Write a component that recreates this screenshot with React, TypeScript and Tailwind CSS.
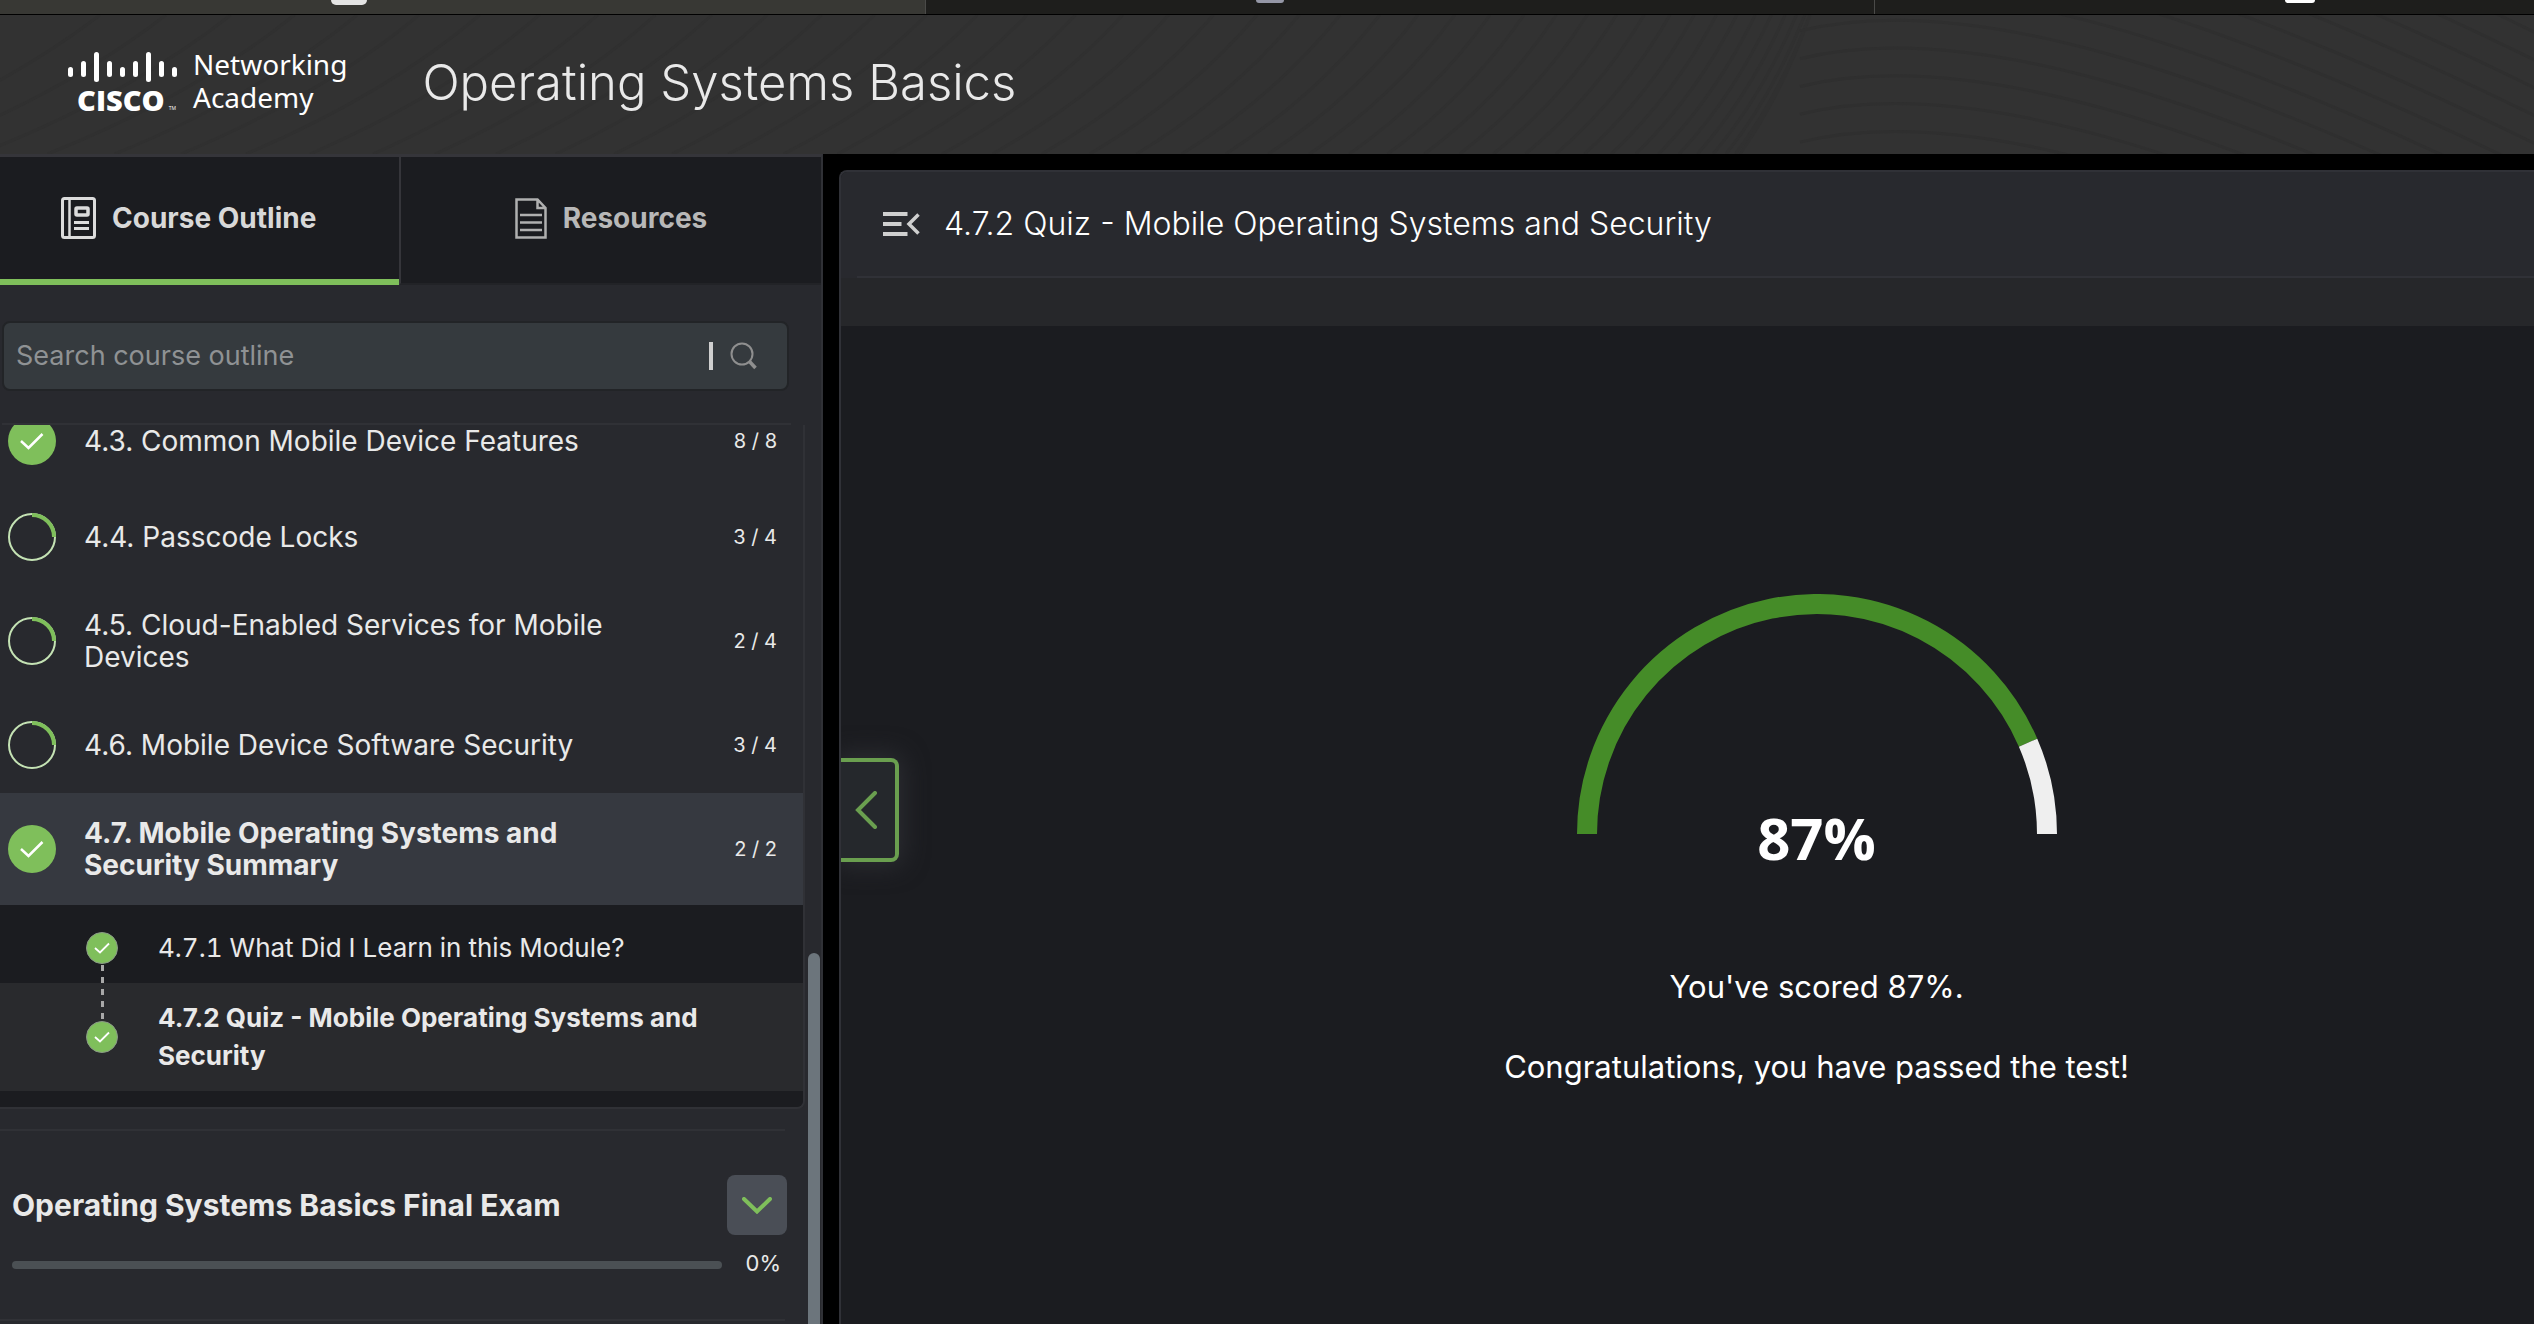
import React from "react";

type Status = "done" | "partial";

interface Section {
  title: string;
  count: string;
  status: Status;
  active?: boolean;
}

const sections: Section[] = [
  { title: "4.3. Common Mobile Device Features", count: "8 / 8", status: "done" },
  { title: "4.4. Passcode Locks", count: "3 / 4", status: "partial" },
  { title: "4.5. Cloud-Enabled Services for Mobile Devices", count: "2 / 4", status: "partial" },
  { title: "4.6. Mobile Device Software Security", count: "3 / 4", status: "partial" },
  { title: "4.7. Mobile Operating Systems and Security Summary", count: "2 / 2", status: "done", active: true },
];

function StatusIcon({ status }: { status: Status }) {
  if (status === "done") {
    return (
      <svg viewBox="0 0 48 48" className="size-12 shrink-0" aria-label="Completed">
        <circle cx="24" cy="24" r="24" fill="#7fbf5b" />
        <path d="M13 24 L20.500 31 L34.500 17" fill="none" stroke="#fff" strokeWidth="2.5" />
      </svg>
    );
  }
  return (
    <svg viewBox="0 0 48 48" className="size-12 shrink-0" aria-label="In progress">
      <circle cx="24" cy="24" r="23" fill="none" stroke="#c4e2b4" strokeWidth="2" />
      <path d="M24 2 A22 22 0 0 1 46 24" fill="none" stroke="#7fbf5b" strokeWidth="4" />
    </svg>
  );
}

function SmallCheck() {
  return (
    <svg viewBox="0 0 32 32" className="relative size-8 shrink-0" aria-label="Completed">
      <circle cx="16" cy="16" r="15.5" fill="#7fbf5b" stroke="#8a9a86" strokeWidth="1" />
      <path d="M9 16 L14 20.500 L23 11.500" fill="none" stroke="#fff" strokeWidth="1.8" />
    </svg>
  );
}

function HeaderWaves() {
  const left = Array.from({ length: 44 }, (_, i) => {
    const t = i / 43;
    const x = -160 + 1900 * (1 - Math.pow(1 - t, 1.6));
    const run = 260 - 190 * t;
    return `M${x} 140 Q${x + run * 0.6} 80 ${x + run} 0`;
  });
  const right = Array.from({ length: 13 }, (_, i) => {
    const y = -210 + i * 28;
    return `M1800 ${y + 30} C1960 ${y - 10} 2200 ${y + 60} 2560 ${y + 240}`;
  });
  return (
    <svg
      viewBox="0 0 2534 140"
      preserveAspectRatio="none"
      className="absolute inset-0 size-full"
      aria-hidden="true"
    >
      <path d={left.join(" ")} fill="none" stroke="#303030" strokeWidth="3" />
      <path d={right.join(" ")} fill="none" stroke="#2f2f2f" strokeWidth="3" />
    </svg>
  );
}

function Logo() {
  const bars = [
    [15, 25],
    [9, 25],
    [0, 30],
    [9, 25],
    [15, 25],
    [9, 25],
    [0, 30],
    [9, 25],
    [15, 25],
  ];
  return (
    <a href="#home" className="flex items-center gap-4 text-white">
      <span className="flex w-[109px] flex-col">
        <svg viewBox="0 0 109 30" className="h-[30px] w-[109px]" aria-hidden="true">
          {bars.map(([a, b], i) => (
            <rect key={i} x={i * 13} y={a} width="5" height={b - a} rx="2.5" fill="#fff" />
          ))}
        </svg>
        <span className="flex items-end justify-center pl-2 pt-1 font-['Open_Sans'] text-[29px] font-extrabold leading-7">
          CISCO
          <span className="pl-1 text-[5px] font-normal leading-3">TM</span>
        </span>
      </span>
      <span className="pb-1 font-['Noto_Sans'] text-[28px] leading-[33px]">
        Networking
        <br />
        Academy
      </span>
    </a>
  );
}

function BrowserStrip() {
  return (
    <div className="flex h-[15px] shrink-0 border-b border-black bg-[#1e1e1c]">
      <div className="w-[926px] border-r border-[#4a4a48] bg-[#383834] pl-[331px]">
        <div className="h-[5px] w-9 rounded-b-lg bg-[#e4e4e4]" />
      </div>
      <div className="w-[949px] border-r border-[#4a4a48] pl-[330px]">
        <div className="h-[3px] w-7 rounded-b-lg bg-[#9597a6]" />
      </div>
      <div className="flex-1 pl-[410px]">
        <div className="h-[3px] w-[30px] rounded-b-lg bg-white" />
      </div>
    </div>
  );
}

function Sidebar() {
  return (
    <aside className="flex w-[823px] shrink-0 flex-col border-r-2 border-t-[3px] border-r-[#303136] border-t-[#35353a] bg-[#28292e]">
      <div className="flex h-32 shrink-0" role="tablist">
        <button
          role="tab"
          aria-selected="true"
          className="flex w-[399px] items-center gap-4 border-b-6 border-[#7fbf5b] bg-[#1b1c20] pl-[61px] text-[28px] font-bold text-[#d8d8d8]"
        >
          <svg viewBox="0 0 35 42" className="h-[42px] w-[35px]" fill="none" stroke="#dcdcdc" aria-hidden="true">
            <rect x="1.5" y="1.5" width="32" height="39" rx="2" strokeWidth="3" />
            <path d="M8.5 2 V40" strokeWidth="2.5" />
            <rect x="15" y="11" width="12" height="7" rx="1" strokeWidth="3.5" />
            <path d="M13 25.5 H28 M13 31.5 H28" strokeWidth="3" />
          </svg>
          Course Outline
        </button>
        <button
          role="tab"
          aria-selected="false"
          className="flex flex-1 items-center justify-center gap-4 border-b-2 border-l-2 border-b-[#222327] border-l-[#35353a] bg-[#1b1c20] pb-1 text-[28px] font-bold text-[#b8b8b8]"
        >
          <svg viewBox="0 0 32 41" className="h-[41px] w-8" fill="none" stroke="#b0b0b0" strokeWidth="2.5" aria-hidden="true">
            <path d="M1.5 1.5 H22.5 L30.5 10 V39.5 H1.5 Z M22.5 1.5 V10 H30.5" />
            <path d="M5 17 H27 M5 24.5 H27 M5 32 H27" />
          </svg>
          Resources
        </button>
      </div>

      <div className="flex min-h-0 flex-1">
        <div className="flex min-w-0 flex-1 flex-col pt-9">
          <div className="ml-[2px] mr-4 flex h-[70px] shrink-0 items-center rounded-lg border-2 border-[#222427] bg-[#353a3e] pl-3 pr-[30px]">
            <input
              type="text"
              aria-label="Search course outline"
              placeholder="Search course outline"
              className="min-w-0 flex-1 bg-transparent text-[27px] text-[#e8e8e8] outline-none placeholder:text-[#8f9294]"
            />
            <span className="mr-[17px] h-7 w-1 bg-[#cfcfcf]" />
            <button aria-label="Search">
              <svg viewBox="0 0 27 28" className="h-7 w-[27px]" fill="none" stroke="#8f8f8f" aria-hidden="true">
                <circle cx="12" cy="12" r="10.5" strokeWidth="2" />
                <path d="M19.5 19.5 L25.5 26" strokeWidth="3.5" />
              </svg>
            </button>
          </div>

          <div className="ml-[2px] mr-[14px] mt-8 h-[2px] shrink-0 bg-[#303136]" />

          <div className="shrink-0 overflow-hidden rounded-br-lg border-b-2 border-r-2 border-[#303136]">
            <ul className="-mt-8">
              {sections.map((s) => (
                <li key={s.title}>
                  <a
                    href="#section"
                    className={
                      s.active
                        ? "flex min-h-24 items-center bg-[#363940] py-6 pl-2 pr-[26px] font-bold"
                        : "flex min-h-24 items-center py-6 pl-2 pr-[26px]"
                    }
                  >
                    <StatusIcon status={s.status} />
                    <span className="ml-7 w-[550px] text-[28px] leading-8">{s.title}</span>
                    <span className="ml-auto text-xl font-normal">{s.count}</span>
                  </a>
                </li>
              ))}
            </ul>
            <ul className="bg-[#1b1c20] pb-4 pt-2 text-[26px] leading-[38px]">
              <li>
                <a href="#471" className="flex items-center gap-10 py-4 pl-[86px] pr-20 tabular-nums">
                  <SmallCheck />
                  <span>4.7.1 What Did I Learn in this Module?</span>
                </a>
              </li>
              <li className="relative bg-[#292a2d]">
                <svg className="absolute -top-[18px] left-[101px] h-[56px] w-[3px]" aria-hidden="true">
                  <path d="M1.5 0 V56" stroke="#a8a8a8" strokeWidth="3" strokeDasharray="6 6" />
                </svg>
                <a href="#472" className="flex items-center gap-10 py-4 pl-[86px] pr-20 font-bold">
                  <SmallCheck />
                  <span>4.7.2 Quiz - Mobile Operating Systems and Security</span>
                </a>
              </li>
            </ul>
          </div>

          <div className="mr-5 mt-5 shrink-0 border-y-2 border-[#303136] pb-[42px] pl-3 pt-11">
            <div className="-mr-[2px] flex items-center justify-between">
              <h2 className="text-[30px] font-bold">Operating Systems Basics Final Exam</h2>
              <button
                aria-label="Expand Final Exam"
                className="flex size-[60px] items-center justify-center rounded-lg bg-[#4a4e56]"
              >
                <svg viewBox="0 0 30 17" className="h-[17px] w-[30px]" fill="none" aria-hidden="true">
                  <path d="M2 2 L15 14.5 L28 2" stroke="#7fbf5b" strokeWidth="4" strokeLinecap="round" />
                </svg>
              </button>
            </div>
            <div className="mt-[14px] flex items-center gap-6">
              <div
                role="progressbar"
                aria-label="Final Exam progress"
                aria-valuenow={0}
                className="mt-1 h-2 flex-1 rounded-full bg-[#4b5054]"
              />
              <span className="pr-1 text-[22px] leading-7">0%</span>
            </div>
          </div>
        </div>
        <div className="flex w-4 shrink-0 flex-col items-start pl-[3px] pt-[668px]">
          <div className="w-3 flex-1 rounded-t-full bg-[#6c757c]" />
        </div>
      </div>
    </aside>
  );
}

function Gauge({ value }: { value: number }) {
  const r = 230;
  const a = Math.PI * (1 - value / 100);
  const x = 240 + r * Math.cos(a);
  const y = 240 - r * Math.sin(a);
  return (
    <svg viewBox="0 0 480 240" className="h-60 w-[480px]" fill="none" strokeWidth="20" aria-hidden="true">
      <path d={`M10 240 A${r} ${r} 0 0 1 ${x} ${y}`} stroke="#458c28" />
      <path d={`M${x} ${y} A${r} ${r} 0 0 1 470 240`} stroke="#efefef" />
    </svg>
  );
}

function QuizPanel() {
  return (
    <main className="flex min-w-0 flex-1 bg-black pl-4 pt-4">
      <div className="relative flex min-w-0 flex-1 flex-col overflow-hidden rounded-tl-lg border-l-2 border-t-2 border-[#303137] bg-[#1b1c20]">
        <div className="bg-[#28292e] pl-4">
          <div className="flex h-[106px] items-center gap-6 border-b-2 border-[#303137] pl-[26px]">
            <button aria-label="Collapse outline">
              <svg viewBox="0 0 37 24" className="h-6 w-[37px]" fill="none" stroke="#cfcfcf" aria-hidden="true">
                <path d="M0 2 H24.500 M0 12 H18.500 M0 22 H24.500" strokeWidth="4" />
                <path d="M35.500 2.500 L26 12 L35.500 21.500" strokeWidth="3.500" />
              </svg>
            </button>
            <h1 className="text-[32px] font-light text-white">
              4.7.2 Quiz - Mobile Operating Systems and Security
            </h1>
          </div>
        </div>
        <div className="h-12 shrink-0 bg-[#26272a]" />
        <div className="flex flex-col items-center pl-[258px] pt-[268px] text-white">
          <Gauge value={87} />
          <p className="-mt-9 font-['Open_Sans'] text-[58px] font-bold leading-[80px]">87%</p>
          <p className="mt-[89px] text-[31px] leading-10">You've scored 87%.</p>
          <p className="mt-10 text-[31px] leading-10">Congratulations, you have passed the test!</p>
        </div>
        <button
          aria-label="Previous"
          className="absolute left-0 top-[586px] flex h-26 w-[58px] items-center justify-center rounded-r-lg border-4 border-l-0 border-[#6a9f4f] bg-[#25282c] pr-1 shadow-[0_0_24px_4px_#2c2d32]"
        >
          <svg viewBox="0 0 24 38" className="h-[38px] w-6" fill="none" aria-hidden="true">
            <path d="M21 2 L4 19 L21 36" stroke="#6a9f4f" strokeWidth="4" strokeLinecap="round" />
          </svg>
        </button>
      </div>
    </main>
  );
}

export default function App() {
  return (
    <div className="flex h-screen flex-col overflow-hidden bg-black font-['Inter',sans-serif] text-[#e9e9e9]">
      <BrowserStrip />
      <header className="relative h-[139px] shrink-0 bg-[#323232]">
        <HeaderWaves />
        <div className="relative flex h-full items-center gap-[75px] pb-1 pl-[68px]">
          <Logo />
          <p className="text-[49px] font-light">Operating Systems Basics</p>
        </div>
      </header>
      <div className="flex min-h-0 flex-1">
        <Sidebar />
        <QuizPanel />
      </div>
    </div>
  );
}
